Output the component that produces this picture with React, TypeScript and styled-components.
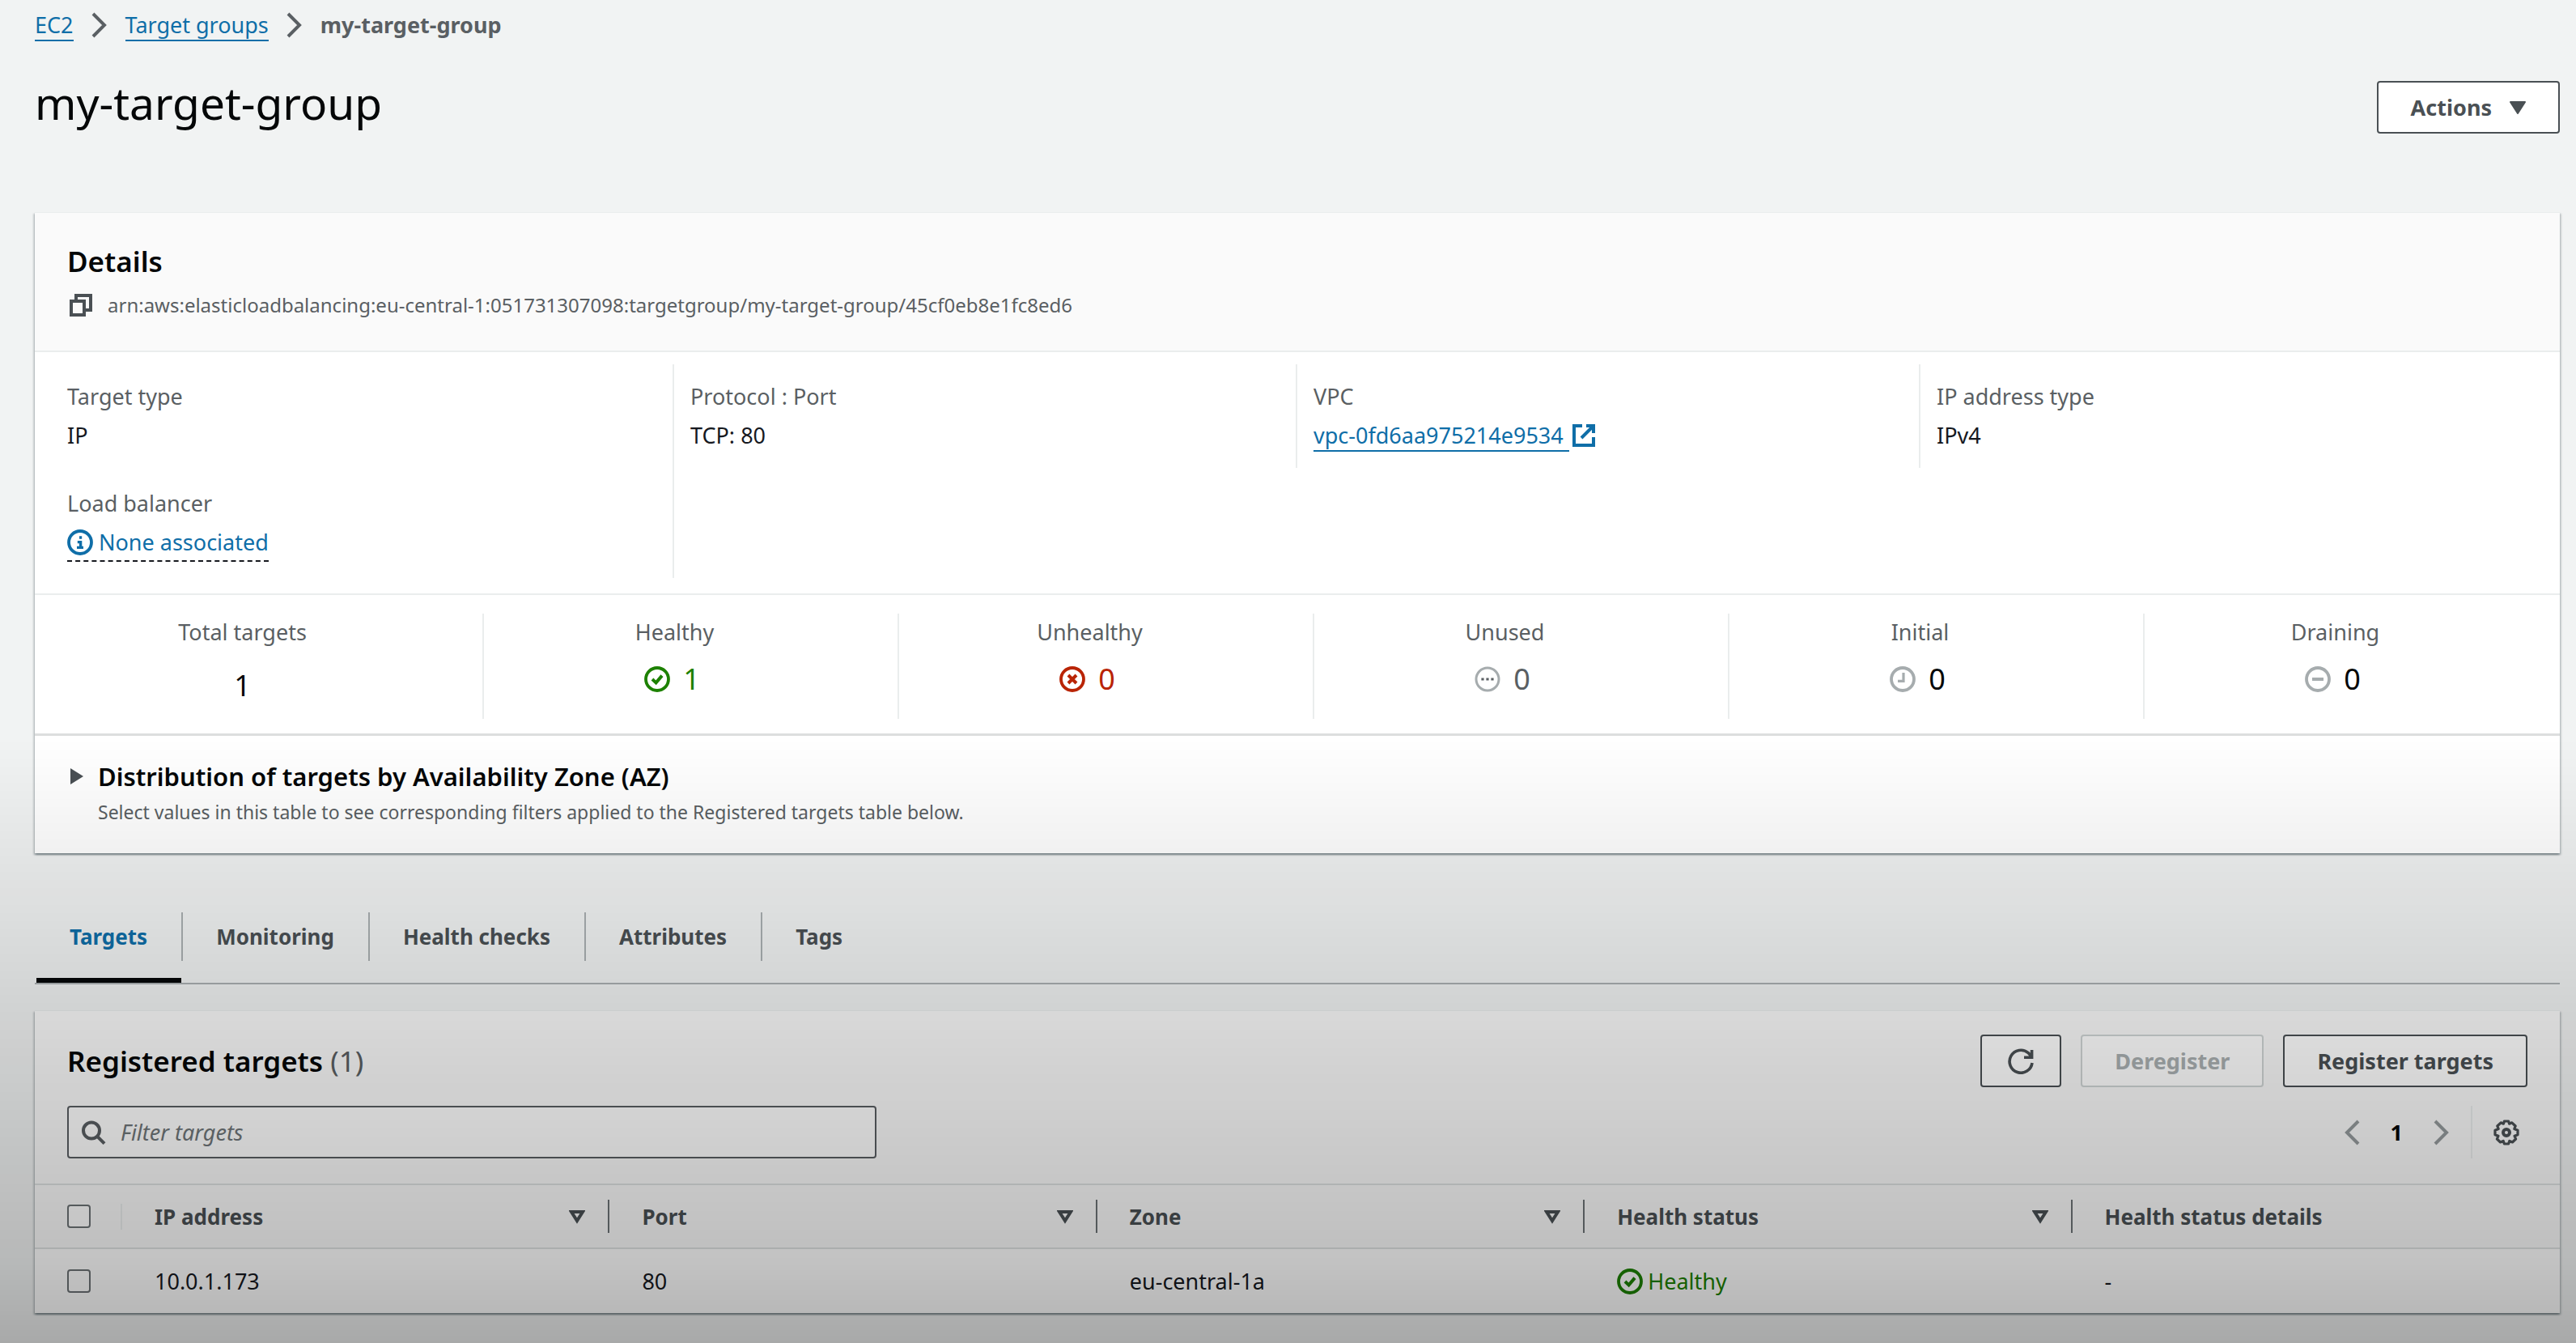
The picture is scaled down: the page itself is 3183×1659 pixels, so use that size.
import React from "react";
import styled, { createGlobalStyle } from "styled-components";

const color = {
  page: "#f1f3f3",
  surface: "#ffffff",
  header: "#fafafa",
  line: "#eaeded",
  text: "#16191f",
  heading: "#050708",
  muted: "#5a5f63",
  strong: "#4a5054",
  disabled: "#aab0b2",
  link: "#0f6ea8",
  success: "#1d8102",
  error: "#b92405",
  icon: "#a6acae",
};

const GlobalStyle = createGlobalStyle`
  *, *::before, *::after { box-sizing: border-box; }
  body {
    margin: 0;
    background: ${color.page};
    color: ${color.text};
    font-family: "Noto Sans", "Open Sans", sans-serif;
    font-size: 27px;
    line-height: 40px;
  }
  button, input { font: inherit; color: inherit; }
  h1, h2, h3, p, ol, ul, dl, dd { margin: 0; padding: 0; }
  ol, ul { list-style: none; }
`;

const Page = styled.div`
  min-height: 100vh;
  padding: 11px 20px 24px 43px;
`;

const Shade = styled.div`
  position: fixed;
  inset: 0;
  pointer-events: none;
  background: linear-gradient(
    to bottom,
    rgba(0, 0, 0, 0) 55%,
    rgba(0, 0, 0, 0.06) 64%,
    rgba(0, 0, 0, 0.13) 75%,
    rgba(0, 0, 0, 0.19) 85%,
    rgba(0, 0, 0, 0.24) 94%,
    rgba(0, 0, 0, 0.3) 100%
  );
`;

const Icon = styled.svg`
  display: block;
  flex: none;
  width: 32px;
  height: 32px;
  fill: none;
  stroke: currentColor;
  stroke-width: 2;
`;

const Crumbs = styled.ol`
  display: flex;
  align-items: center;
  gap: 22px;
  color: ${color.muted};
`;

const Crumb = styled.li<{ $current?: boolean }>`
  font-weight: ${(p) => (p.$current ? 700 : 400)};
`;

const Link = styled.a`
  color: ${color.link};
  text-decoration: none;
  border-bottom: 2px solid currentColor;
`;

const TitleRow = styled.header`
  display: flex;
  align-items: flex-end;
  justify-content: space-between;
  margin: 38px 0 97px;
`;

const Title = styled.h1`
  font-size: 55px;
  font-weight: 400;
  line-height: 76px;
  color: ${color.heading};
`;

const Button = styled.button<{ $square?: boolean }>`
  display: flex;
  align-items: center;
  justify-content: center;
  gap: 22px;
  height: 65px;
  min-width: 100px;
  padding: 0 ${(p) => (p.$square ? 0 : 40)}px;
  border: 2px solid ${color.strong};
  border-radius: 4px;
  background: ${color.surface};
  color: ${color.strong};
  font-weight: 700;

  &:disabled {
    border-color: #d0d5d5;
    color: ${color.disabled};
  }
`;

const Card = styled.section`
  background: ${color.surface};
  border-top: 1px solid ${color.line};
  box-shadow:
    0 2px 2px 0 rgba(0, 28, 36, 0.3),
    2px 2px 2px 0 rgba(0, 28, 36, 0.15),
    -2px 2px 2px 0 rgba(0, 28, 36, 0.15);
`;

const CardHeader = styled.div`
  padding: 36px 40px 38px;
  background: ${color.header};
  border-bottom: 2px solid ${color.line};
`;

const Heading = styled.h2`
  font-size: 35px;
  font-weight: 600;
  line-height: 48px;
  color: ${color.heading};
`;

const Counter = styled.span`
  font-weight: 400;
  color: ${color.muted};
`;

const Arn = styled.div`
  display: flex;
  align-items: center;
  gap: 18px;
  margin-top: 12px;
  font-size: 24px;
  line-height: 36px;
  color: ${color.muted};
`;

const IconButton = styled.button`
  display: flex;
  padding: 0;
  border: 0;
  background: none;
  color: ${color.strong};

  &:disabled {
    color: #959b9d;
  }
`;

const Facts = styled.dl`
  display: grid;
  grid-template-columns: repeat(4, 1fr);
  row-gap: 4px;
  padding: 15px 22px 19px 18px;
  border-bottom: 2px solid ${color.line};
`;

const Fact = styled.div<{ $divided?: boolean; $rows?: number }>`
  grid-row: span ${(p) => p.$rows ?? 1};
  display: flex;
  flex-direction: column;
  align-items: flex-start;
  gap: 8px;
  padding: 20px;
  border-left: 2px solid ${(p) => (p.$divided ? color.line : "transparent")};
`;

const Label = styled.dt`
  color: ${color.muted};
`;

const Value = styled.dd`
  display: flex;
  align-items: center;
  gap: 2px;
  color: ${color.text};
`;

const Popover = styled.button`
  display: flex;
  align-items: center;
  gap: 7px;
  padding: 0 0 2px;
  border: 0;
  border-bottom: 2px dashed ${color.text};
  background: none;
  color: ${color.link};
`;

const Stats = styled.dl`
  display: flex;
  padding: 23px 0 18px;
  border-bottom: 3px solid #dcdede;
`;

const Stat = styled.div<{ $total?: boolean }>`
  flex: 1 1 ${(p) => (p.$total ? 84 : 42)}px;
  display: flex;
  flex-direction: column;
  align-items: center;
  gap: ${(p) => (p.$total ? 22 : 14)}px;
  height: 130px;
  padding: 3px 40px 0 0;
  border-right: 2px solid ${color.line};

  &:last-child {
    border-right-color: transparent;
  }
`;

const StatValue = styled.dd<{ $tone?: string }>`
  display: flex;
  align-items: center;
  gap: 16px;
  font-size: 36px;
  line-height: 48px;
  color: ${(p) => p.$tone ?? color.heading};
`;

const StatIcon = styled.span<{ $tone: string }>`
  color: ${(p) => p.$tone};
`;

const StatNumber = styled.span`
  padding-right: 6px;
`;

const LinkIcon = styled.span`
  color: ${color.link};
`;

const Expander = styled.div`
  display: grid;
  grid-template-columns: 16px 1fr;
  column-gap: 18px;
  row-gap: 4px;
  align-items: center;
  padding: 28px 44px 33px;
`;

const SubHeading = styled.h3`
  font-size: 31px;
  font-weight: 600;
  line-height: 44px;
  color: ${color.heading};
`;

const Hint = styled.p`
  grid-column: 2;
  font-size: 23px;
  line-height: 36px;
  color: ${color.muted};
`;

const Tabs = styled.ul`
  display: flex;
  align-items: flex-start;
  margin: 73px 0 32px;
  padding-left: 2px;
  border-bottom: 2px solid #aab0b2;
  font-size: 26px;
`;

const TabItem = styled.li`
  display: flex;
  align-items: flex-start;
`;

const TabButton = styled.button<{ $active?: boolean }>`
  padding: 10px 42px 31px 41px;
  border: 0;
  border-bottom: 6px solid ${(p) => (p.$active ? color.heading : "transparent")};
  background: none;
  color: ${(p) => (p.$active ? color.link : color.strong)};
  font-weight: 700;
`;

const Divider = styled.span<{ $height: number; $tone: string }>`
  flex: none;
  width: 2px;
  height: ${(p) => p.$height}px;
  background: ${(p) => p.$tone};
`;

const Tools = styled.div`
  padding: 29px 40px 31px;
  background: ${color.header};
  border-bottom: 2px solid #dfe2e2;
`;

const ToolRow = styled.div`
  display: flex;
  align-items: center;
  justify-content: space-between;

  & + & {
    margin-top: 23px;
  }
`;

const Actions = styled.div`
  display: flex;
  gap: 24px;
`;

const Search = styled.label`
  display: flex;
  align-items: center;
  gap: 18px;
  flex: 0 1 1000px;
  height: 65px;
  padding: 0 14px;
  border: 2px solid ${color.muted};
  border-radius: 4px;
  background: ${color.surface};
  color: ${color.muted};
`;

const SearchInput = styled.input`
  flex: 1;
  min-width: 0;
  padding: 0;
  border: 0;
  outline: 0;
  background: none;

  &::placeholder {
    color: #6f7679;
    font-style: italic;
    opacity: 1;
  }
`;

const Pager = styled.nav`
  display: flex;
  align-items: center;
  padding-right: 10px;
`;

const PageNumber = styled.span`
  padding: 0 38px;
  font-weight: 700;
  color: ${color.heading};
`;

const PagerDivider = styled(Divider)`
  margin: 0 26px;
`;

const Table = styled.table`
  width: 100%;
  table-layout: fixed;
  border-collapse: collapse;
`;

const CheckCol = styled.col`
  width: 108px;
`;

const HeadRow = styled.tr`
  height: 78px;
  background: ${color.header};
  border-bottom: 2px solid #dfe2e2;
  font-size: 26px;
`;

const BodyRow = styled.tr`
  height: 80px;
`;

const HeadCell = styled.th`
  padding: 0;
  text-align: left;
  color: ${color.strong};
`;

const HeadInner = styled.div`
  display: flex;
  align-items: center;
  gap: 28px;
  height: 41px;
  padding-left: 40px;
`;

const HeadLabel = styled.span`
  flex: 1;
`;

const Cell = styled.td`
  padding: 0 40px;
`;

const Check = styled.input`
  appearance: none;
  display: block;
  width: 29px;
  height: 29px;
  margin: 0;
  border: 2px solid #6d7376;
  border-radius: 4px;
  background: ${color.surface};
`;

const Status = styled.span`
  display: flex;
  align-items: center;
  gap: 6px;
  color: ${color.success};
`;

const Chevron = ({ left }: { left?: boolean }) => (
  <svg width="20" height="32" viewBox="0 0 20 32" fill="none" stroke="currentColor" strokeWidth="4">
    <path d={left ? "M18 2 L4 16 L18 30" : "M2 2 L16 16 L2 30"} />
  </svg>
);

const Caret = () => (
  <svg width="20" height="16" viewBox="0 0 20 16" fill="currentColor" stroke="currentColor" strokeWidth="2" strokeLinejoin="round">
    <path d="M1 1 H19 L10 15 Z" />
  </svg>
);

const SortIcon = () => (
  <svg width="20" height="18" viewBox="0 0 20 18" fill="none" stroke="currentColor" strokeWidth="4">
    <path d="M3 3 H17 L10 14 Z" />
  </svg>
);

const Circle = ({ children, thin }: { children: React.ReactNode; thin?: boolean }) => (
  <Icon viewBox="0 0 16 16" aria-hidden="true">
    <circle cx="8" cy="8" r="7" strokeWidth={thin ? 1.5 : 1.9} />
    {children}
  </Icon>
);

const icons = {
  check: <Circle><path d="M5 8 L7.3 10.2 L11 5.8" /></Circle>,
  cross: <Circle><path d="M5.5 5.5 L10.5 10.5 M10.5 5.5 L5.5 10.5" /></Circle>,
  dots: <Circle thin><path d="M4.2 8 H5.8 M7.2 8 H8.8 M10.2 8 H11.8" stroke={color.muted} strokeWidth="1.5" /></Circle>,
  clock: <Circle><path d="M8.5 4 V9.2 H5" strokeWidth="1.6" /></Circle>,
  minus: <Circle><path d="M4.5 8 H11.5" /></Circle>,
  info: <Circle><path d="M7.5 5 H9.1 M6.4 7.8 H8.3 V11 M6 11.2 H10" strokeWidth="1.7" /></Circle>,
};

const stats = [
  { label: "Healthy", value: 1, icon: icons.check, tone: color.success, iconTone: color.success },
  { label: "Unhealthy", value: 0, icon: icons.cross, tone: color.error, iconTone: color.error },
  { label: "Unused", value: 0, icon: icons.dots, tone: color.muted, iconTone: color.icon },
  { label: "Initial", value: 0, icon: icons.clock, tone: color.heading, iconTone: color.icon },
  { label: "Draining", value: 0, icon: icons.minus, tone: color.heading, iconTone: color.icon },
];

const tabs = ["Targets", "Monitoring", "Health checks", "Attributes", "Tags"];
const columns = ["IP address", "Port", "Zone", "Health status", "Health status details"];

export default function App() {
  return (
    <Page>
      <GlobalStyle />
      <nav aria-label="Breadcrumb">
        <Crumbs>
          <Crumb><Link href="#ec2">EC2</Link></Crumb>
          <Chevron />
          <Crumb><Link href="#target-groups">Target groups</Link></Crumb>
          <Chevron />
          <Crumb $current>my-target-group</Crumb>
        </Crumbs>
      </nav>

      <TitleRow>
        <Title>my-target-group</Title>
        <Button type="button">Actions <Caret /></Button>
      </TitleRow>

      <Card>
        <CardHeader>
          <Heading>Details</Heading>
          <Arn>
            <IconButton type="button" aria-label="Copy ARN">
              <Icon viewBox="0 0 16 16">
                <path d="M2.5 5.5 H10.5 V14 H2.5 Z M5.5 5.5 V2 H14.5 V11 H10.5" />
              </Icon>
            </IconButton>
            arn:aws:elasticloadbalancing:eu-central-1:051731307098:targetgroup/my-target-group/45cf0eb8e1fc8ed6
          </Arn>
        </CardHeader>

        <Facts>
          <Fact>
            <Label>Target type</Label>
            <Value>IP</Value>
          </Fact>
          <Fact $divided $rows={2}>
            <Label>Protocol : Port</Label>
            <Value>TCP: 80</Value>
          </Fact>
          <Fact $divided>
            <Label>VPC</Label>
            <Value>
              <span><Link href="#vpc">vpc-0fd6aa975214e9534&nbsp;</Link></span>
              <LinkIcon>
                <Icon viewBox="0 0 16 16">
                  <path d="M7 2 H2 V14 H14 V9 M9.5 2 H14 V6.5 M14 2 L6.5 9.5" />
                </Icon>
              </LinkIcon>
            </Value>
          </Fact>
          <Fact $divided>
            <Label>IP address type</Label>
            <Value>IPv4</Value>
          </Fact>
          <Fact>
            <Label>Load balancer</Label>
            <Value><Popover type="button">{icons.info}None associated</Popover></Value>
          </Fact>
        </Facts>

        <Stats>
          <Stat $total>
            <Label>Total targets</Label>
            <StatValue>1</StatValue>
          </Stat>
          {stats.map((s) => (
            <Stat key={s.label}>
              <Label>{s.label}</Label>
              <StatValue $tone={s.tone}>
                <StatIcon $tone={s.iconTone}>{s.icon}</StatIcon>
                <StatNumber>{s.value}</StatNumber>
              </StatValue>
            </Stat>
          ))}
        </Stats>

        <Expander>
          <IconButton type="button" aria-label="Expand distribution">
            <svg width="16" height="20" viewBox="0 0 16 20" fill="currentColor">
              <path d="M0 0 L16 10 L0 20 Z" />
            </svg>
          </IconButton>
          <SubHeading>Distribution of targets by Availability Zone (AZ)</SubHeading>
          <Hint>Select values in this table to see corresponding filters applied to the Registered targets table below.</Hint>
        </Expander>
      </Card>

      <Tabs role="tablist">
        {tabs.map((tab, i) => (
          <TabItem key={tab} role="presentation">
            <TabButton type="button" role="tab" aria-selected={i === 0} $active={i === 0}>{tab}</TabButton>
            {i < tabs.length - 1 && <Divider $height={60} $tone="#aab0b2" />}
          </TabItem>
        ))}
      </Tabs>

      <Card>
        <Tools>
          <ToolRow>
            <Heading>Registered targets <Counter>(1)</Counter></Heading>
            <Actions>
              <Button type="button" $square aria-label="Refresh">
                <Icon viewBox="0 0 16 16">
                  <path d="M15 9 A7 7 0 1 1 12.6 2.8 L14.2 4.6 M14.8 1 V5.6 H10" strokeWidth="1.8" />
                </Icon>
              </Button>
              <Button type="button" disabled>Deregister</Button>
              <Button type="button">Register targets</Button>
            </Actions>
          </ToolRow>
          <ToolRow>
            <Search>
              <Icon viewBox="0 0 16 16">
                <circle cx="7" cy="6.8" r="5" />
                <path d="M10.5 10.3 L15 14.8" />
              </Icon>
              <SearchInput type="text" placeholder="Filter targets" aria-label="Filter targets" />
            </Search>
            <Pager aria-label="Pagination">
              <IconButton type="button" disabled aria-label="Previous page"><Chevron left /></IconButton>
              <PageNumber>1</PageNumber>
              <IconButton type="button" disabled aria-label="Next page"><Chevron /></IconButton>
              <PagerDivider $height={65} $tone={color.line} />
              <IconButton type="button" aria-label="Preferences">
                <Icon viewBox="0 0 16 16">
                  <path
                    d="M6.7 1 H9.3 L9.8 2.6 L11.4 1.9 L13.6 4 L12.9 5.8 L15 6.6 V9.4 L13 10.1 L13.8 12 L11.7 14 L9.9 13.2 L9.3 15 H6.7 L6.1 13.2 L4.3 14 L2.2 12 L3 10.1 L1 9.4 V6.6 L3.1 5.8 L2.4 4 L4.6 1.9 L6.2 2.6 Z"
                    strokeWidth="1.6"
                    strokeLinejoin="round"
                  />
                  <circle cx="8" cy="8" r="2" />
                </Icon>
              </IconButton>
            </Pager>
          </ToolRow>
        </Tools>

        <Table>
          <colgroup>
            <CheckCol />
            {columns.map((c) => <col key={c} />)}
          </colgroup>
          <thead>
            <HeadRow>
              <HeadCell>
                <HeadInner>
                  <HeadLabel><Check type="checkbox" aria-label="Select all targets" /></HeadLabel>
                  <Divider $height={32} $tone={color.line} />
                </HeadInner>
              </HeadCell>
              {columns.map((c, i) => (
                <HeadCell key={c} scope="col">
                  <HeadInner>
                    <HeadLabel>{c}</HeadLabel>
                    {i < columns.length - 1 && (
                      <>
                        <IconButton type="button" aria-label={`Sort by ${c}`}><SortIcon /></IconButton>
                        <Divider $height={41} $tone="#6d7376" />
                      </>
                    )}
                  </HeadInner>
                </HeadCell>
              ))}
            </HeadRow>
          </thead>
          <tbody>
            <BodyRow>
              <Cell><Check type="checkbox" aria-label="Select 10.0.1.173" /></Cell>
              <Cell>10.0.1.173</Cell>
              <Cell>80</Cell>
              <Cell>eu-central-1a</Cell>
              <Cell><Status>{icons.check}Healthy</Status></Cell>
              <Cell>-</Cell>
            </BodyRow>
          </tbody>
        </Table>
      </Card>
      <Shade />
    </Page>
  );
}
